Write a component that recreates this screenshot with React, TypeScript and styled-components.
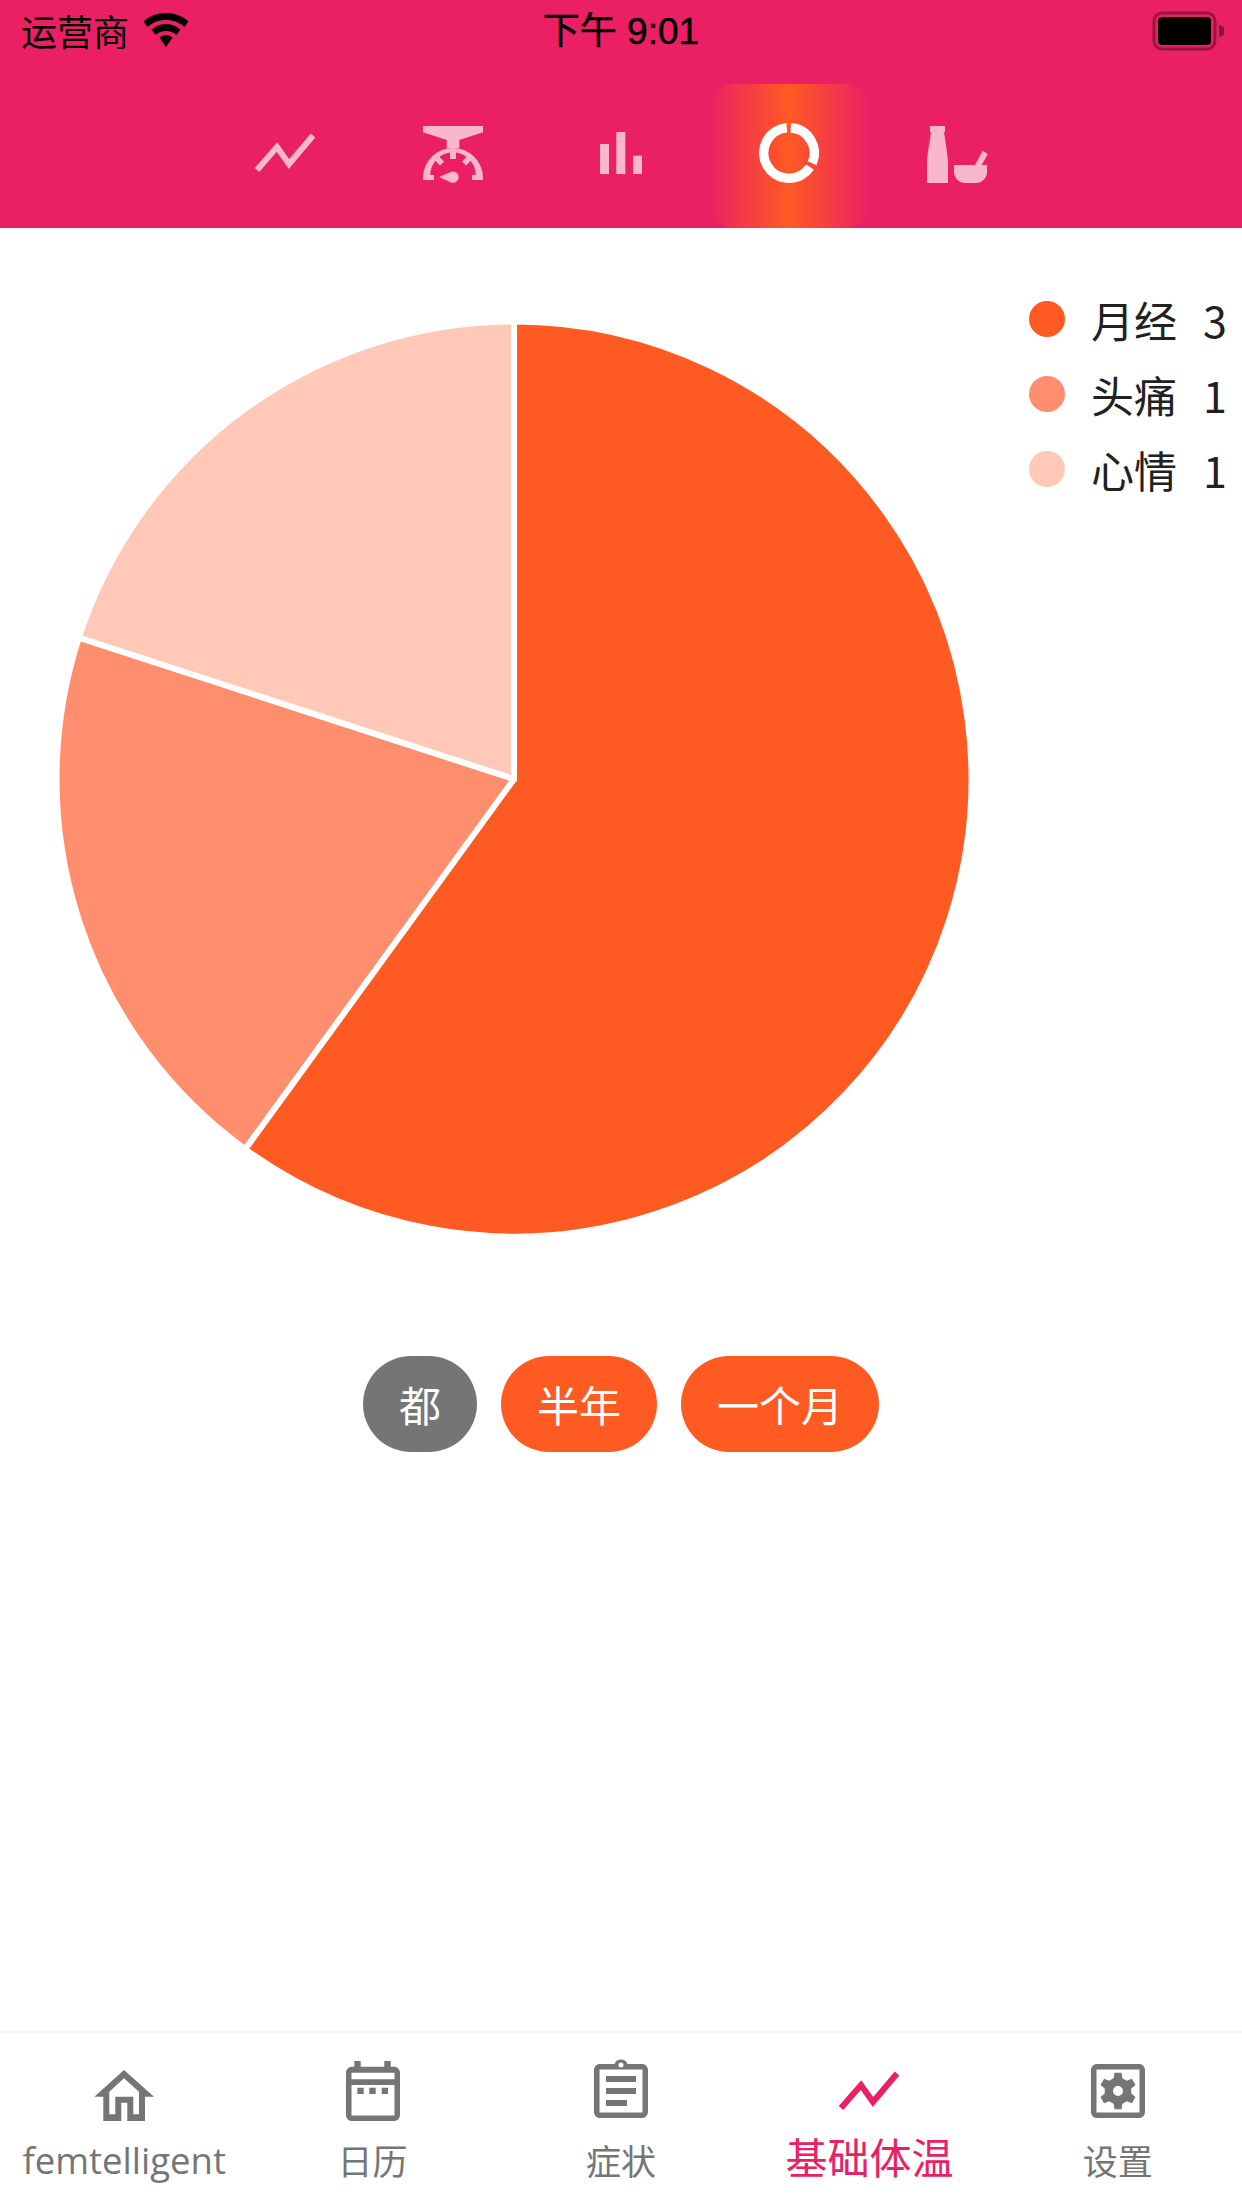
import React from 'react';
import styled, {createGlobalStyle} from "styled-components";

const PINK = '#EB2064';
const ORANGE = '#FF5A22';
const GREY = '#757575';
const CJK = '"Noto Sans CJK SC", "Noto Sans", sans-serif';

const GlobalStyle = createGlobalStyle`
  html, body {
    margin: 0;
    padding: 0;
    background: #fff;
    font-family: ${CJK};
  }
  svg {
    display: block;
  }
`;

const Page = styled.div`
  width: 1242px;
  height: 2208px;
  display: flex;
  flex-direction: column;
  background: #fff;
  overflow: hidden;
`;

const Header = styled.header`
  height: 228px;
  flex: none;
  background: ${PINK};
  display: flex;
  flex-direction: column;
`;

const StatusBar = styled.div`
  height: 84px;
  flex: none;
  padding: 0 18px 20px 21px;
  box-sizing: border-box;
  display: grid;
  grid-template-columns: 1fr auto 1fr;
  align-items: center;
  color: #000;
`;

const Carrier = styled.div`
  display: flex;
  align-items: center;
  gap: 14px;
  padding-bottom: 5px;
  font-size: 36px;
  line-height: 44px;
`;

const Clock = styled.div`
  font-family: "Liberation Sans", "Noto Sans CJK SC", sans-serif;
  font-size: 37px;
  line-height: 44px;
  margin-right: 3px;
  -webkit-text-stroke: 0.5px #000;
`;

const BatteryWrap = styled.div`
  display: flex;
  justify-content: flex-end;
`;

const Tabs = styled.nav`
  flex: 1;
  display: flex;
  justify-content: center;
`;

const Tab = styled.div<{$active?: boolean}>`
  width: 168px;
  display: flex;
  align-items: center;
  justify-content: center;
  padding-bottom: 6px;
  box-sizing: border-box;
  color: ${p => (p.$active ? '#fff' : '#F9B7CE')};
  ${p => p.$active && `
    margin: 0 4px;
    width: 160px;
    border-radius: 24px;
    background: linear-gradient(90deg, ${PINK} 0%, ${ORANGE} 50%, ${PINK} 100%);
  `}
`;

const Main = styled.main`
  flex: 1;
  display: flex;
  flex-direction: column;
`;

const ChartRow = styled.section`
  display: flex;
  height: 1128px;
  box-sizing: border-box;
  padding-left: 52px;
`;

const PieBox = styled.div`
  width: 924px;
  padding-top: 89px;
  flex: none;
`;

const Legend = styled.ul`
  list-style: none;
  margin: 0;
  padding: 61px 0 0 53px;
  display: flex;
  flex-direction: column;
  gap: 15px;
`;

const LegendRow = styled.li`
  display: flex;
  align-items: center;
  height: 60px;
  font-size: 43px;
  line-height: 58px;
  color: #212121;
  white-space: nowrap;
`;

const Dot = styled.span<{$color: string}>`
  width: 36px;
  height: 36px;
  border-radius: 50%;
  flex: none;
  margin-right: 26px;
  background: ${p => p.$color};
`;

const LegendCount = styled.span`
  margin-left: 26px;
`;

const Ranges = styled.div`
  display: flex;
  justify-content: center;
  gap: 24px;
`;

const RangeButton = styled.button<{$muted?: boolean}>`
  height: 96px;
  padding: 0 36px;
  border: none;
  border-radius: 48px;
  color: #fff;
  font-family: ${CJK};
  font-size: 42px;
  line-height: 92px;
  background: ${p => (p.$muted ? GREY : ORANGE)};
`;

const BottomBar = styled.footer`
  height: 175px;
  flex: none;
  display: grid;
  grid-template-columns: repeat(5, 1fr);
  border-top: 2px solid #f6f6f6;
  background: #fff;
`;

const BottomItem = styled.div<{$active?: boolean}>`
  display: flex;
  flex-direction: column;
  align-items: center;
  color: ${p => (p.$active ? PINK : GREY)};
`;

const BottomIcon = styled.div`
  height: 102px;
  padding-top: 22px;
  box-sizing: border-box;
`;

const BottomLabel = styled.div<{$active?: boolean; $latin?: boolean}>`
  font-size: ${p => (p.$active ? 42 : 35)}px;
  line-height: 50px;
  margin-top: ${p => (p.$active ? -4 : 0)}px;
  ${p => p.$latin && `font-family: "Open Sans", sans-serif; font-size: 36.5px;`}
`;

const polar = (deg: number, r: number, c: number) => {
  const a = ((deg - 90) * Math.PI) / 180;
  return [c + r * Math.cos(a), c + r * Math.sin(a)];
};

const arcPath = (from: number, to: number, r: number, c: number) => {
  const [x1, y1] = polar(from, r, c);
  const [x2, y2] = polar(to, r, c);
  const large = to - from > 180 ? 1 : 0;
  return `M${x1} ${y1}A${r} ${r} 0 ${large} 1 ${x2} ${y2}`;
};

const slicePath = (from: number, to: number, r: number, c: number) =>
  `M${c} ${c}L${arcPath(from, to, r, c).slice(1)}Z`;

const gearPath = () => {
  const pts: string[] = [];
  for (let i = 0; i < 6; i++) {
    const a = i * 60;
    [[a - 19, 13.5], [a - 11, 18.5], [a + 11, 18.5], [a + 19, 13.5]].forEach(([deg, r]) => {
      const [x, y] = polar(deg, r, 36);
      pts.push(`${x} ${y}`);
    });
  }
  return `M${pts.join('L')}Z`;
};

const data = [
  {name: '月经', value: 3, color: '#FF5A22'},
  {name: '头痛', value: 1, color: '#FF8E6E'},
  {name: '心情', value: 1, color: '#FFC8B7'},
];

const Pie = () => {
  const total = data.reduce((s, d) => s + d.value, 0);
  let angle = 0;
  return (
    <svg width="924" height="924" viewBox="0 0 924 924">
      {data.map(d => {
        const from = angle;
        angle += (d.value / total) * 360;
        return (
          <path
            key={d.name}
            d={slicePath(from, angle, 457.5, 462)}
            fill={d.color}
            stroke="#fff"
            strokeWidth="6"
            strokeLinejoin="round"
          />
        );
      })}
    </svg>
  );
};

const Wifi = () => (
  <svg width="46" height="36" viewBox="0 0 46 36" fill="#000">
    <path d="M23 1C14 1 6.500 4 0.500 9.500L4.500 15C9.500 10.500 16 8 23 8S36.500 10.500 41.500 15L45.500 9.500C39.500 4 32 1 23 1Z" />
    <path d="M23 12C17.500 12 12.500 14 8.500 17.500L12.500 23C15.500 20.500 19 19 23 19S30.500 20.500 33.500 23L37.500 17.500C33.500 14 28.500 12 23 12Z" />
    <path d="M23 23C20.500 23 18.200 24 16.500 25.500L23 35L29.500 25.500C27.800 24 25.500 23 23 23Z" />
  </svg>
);

const Battery = () => (
  <svg width="72" height="42" viewBox="0 0 72 42">
    <rect x="2" y="2" width="61" height="36" rx="8" fill="none" stroke="#000" strokeOpacity="0.35" strokeWidth="3" />
    <rect x="6" y="6" width="53" height="28" rx="4" fill="#000" />
    <path d="M67 14a6 6 0 0 1 0 12Z" fill="#000" fillOpacity="0.4" />
  </svg>
);

const Icon = ({children, fill = 'currentColor'}: {children: React.ReactNode; fill?: string}) => (
  <svg width="72" height="72" viewBox="0 0 72 72" fill={fill}>
    {children}
  </svg>
);

const TrendIcon = () => (
  <Icon fill="none">
    <path d="M8 53L28 30L40 47L64 18.500" stroke="currentColor" strokeWidth="6" />
  </Icon>
);

const ScaleIcon = () => (
  <Icon>
    <path d="M6 9H66V15.300L42.300 23V31H29.700V23L6 15.300Z" />
    <path d="M36 31A30 30 0 0 1 66 61V63H55V58H58.700A22.700 22.700 0 0 0 13.300 58H17V63H6V61A30 30 0 0 1 36 31Z" />
    <path d="M33 33H39V42H33Z" />
    <path d="M18 43.500L22 39.500L27 44.500L23 48.500Z" />
    <path d="M54 43.500L50 39.500L45 44.500L49 48.500Z" />
    <path d="M22 60L34 55A5.600 5.600 0 1 1 34 65.400Z" />
  </Icon>
);

const BarsIcon = () => (
  <Icon>
    <path d="M15 27H24V57H15Z" />
    <path d="M31.300 15H40.300V57H31.300Z" />
    <path d="M48 38.700H57V57H48Z" />
  </Icon>
);

const DonutIcon = () => (
  <Icon fill="none">
    <g stroke="currentColor" strokeWidth="9.500">
      <path d={arcPath(4, 114, 25.300, 36)} />
      <path d={arcPath(124, 355, 25.300, 36)} />
    </g>
  </Icon>
);

const MortarIcon = () => (
  <Icon>
    <path d="M9 9H24V15H23C24.500 26 27 38 27 48V66H6V48C6 38 8.500 26 10 15H9Z" />
    <path d="M33 48H66V55C66 61 61 66 55 66H44C38 66 33 61 33 55Z" />
    <path d="M54 48L61.700 33.700L66.700 37L60.700 48Z" />
  </Icon>
);

const HomeIcon = () => (
  <Icon>
    <path
      fillRule="evenodd"
      d="M36 15L66 41.700H57V66H39.300V47.700H33.300V66H15.300V41.700H6.300ZM36 23.300L21.300 36.700V59.300H27.300V41.700H45.300V59.300H51V36.700Z"
    />
  </Icon>
);

const CalendarIcon = () => (
  <Icon>
    <path
      fillRule="evenodd"
      d="M17.300 6H23.700V11.700H47.300V6H53.700V11.700H57C60.300 11.700 63 14.400 63 17.700V60C63 63.300 60.300 66 57 66H15C11.700 66 9 63.300 9 60V17.700C9 14.400 11.700 11.700 15 11.700H17.300ZM14.500 17.700V24.300H57.500V17.700ZM14.500 30V60.500H57.500V30Z"
    />
    <path d="M20.300 32.700H26.700V39H20.300ZM32.300 32.700H38.700V39H32.300ZM44.700 32.700H51V39H44.700Z" />
  </Icon>
);

const ClipboardIcon = () => (
  <Icon>
    <path
      fillRule="evenodd"
      d="M15 9H29.500A7 7 0 0 1 42.500 9H57C60.300 9 63 11.700 63 15V57C63 60.300 60.300 63 57 63H15C11.700 63 9 60.300 9 57V15C9 11.700 11.700 9 15 9ZM14.500 14.500V57.500H57.500V14.500ZM36 7.500A2.500 2.500 0 1 0 36 12.500A2.500 2.500 0 1 0 36 7.500Z"
    />
    <path d="M21 21H51V27H21ZM21 33H51V39H21ZM21 45H42V51H21Z" />
  </Icon>
);

const SettingsIcon = () => (
  <Icon>
    <path
      fillRule="evenodd"
      d="M15 9H57C60.300 9 63 11.700 63 15V57C63 60.300 60.300 63 57 63H15C11.700 63 9 60.300 9 57V15C9 11.700 11.700 9 15 9ZM14.500 14.500V57.500H57.500V14.500Z"
    />
    <path fillRule="evenodd" d={`${gearPath()}M36 31A5 5 0 1 0 36 41A5 5 0 1 0 36 31Z`} />
  </Icon>
);

export default function App() {
  return (
    <Page>
      <GlobalStyle />
      <Header>
        <StatusBar>
          <Carrier>运营商<Wifi /></Carrier>
          <Clock>下午 9:01</Clock>
          <BatteryWrap><Battery /></BatteryWrap>
        </StatusBar>
        <Tabs>
          <Tab><TrendIcon /></Tab>
          <Tab><ScaleIcon /></Tab>
          <Tab><BarsIcon /></Tab>
          <Tab $active><DonutIcon /></Tab>
          <Tab><MortarIcon /></Tab>
        </Tabs>
      </Header>
      <Main>
        <ChartRow>
          <PieBox><Pie /></PieBox>
          <Legend>
            {data.map(d => (
              <LegendRow key={d.name}>
                <Dot $color={d.color} />
                {d.name}
                <LegendCount>{d.value}</LegendCount>
              </LegendRow>
            ))}
          </Legend>
        </ChartRow>
        <Ranges>
          <RangeButton $muted>都</RangeButton>
          <RangeButton>半年</RangeButton>
          <RangeButton>一个月</RangeButton>
        </Ranges>
      </Main>
      <BottomBar>
        <BottomItem>
          <BottomIcon><HomeIcon /></BottomIcon>
          <BottomLabel $latin>femtelligent</BottomLabel>
        </BottomItem>
        <BottomItem>
          <BottomIcon><CalendarIcon /></BottomIcon>
          <BottomLabel>日历</BottomLabel>
        </BottomItem>
        <BottomItem>
          <BottomIcon><ClipboardIcon /></BottomIcon>
          <BottomLabel>症状</BottomLabel>
        </BottomItem>
        <BottomItem $active>
          <BottomIcon><TrendIcon /></BottomIcon>
          <BottomLabel $active>基础体温</BottomLabel>
        </BottomItem>
        <BottomItem>
          <BottomIcon><SettingsIcon /></BottomIcon>
          <BottomLabel>设置</BottomLabel>
        </BottomItem>
      </BottomBar>
    </Page>
  );
}
